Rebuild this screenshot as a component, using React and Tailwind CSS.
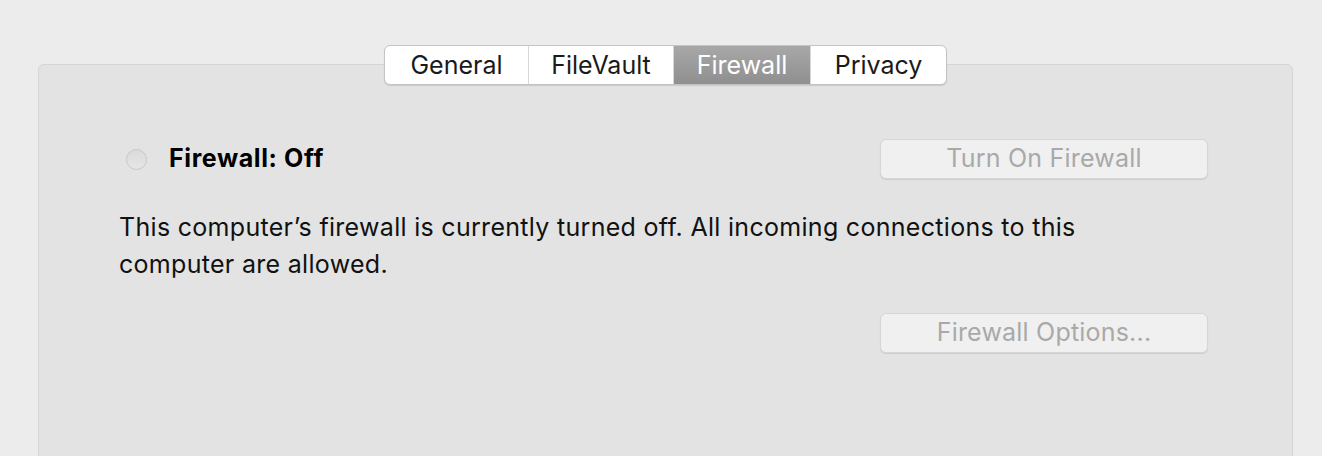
import React from 'react';

const tabs = ['General', 'FileVault', 'Firewall', 'Privacy'];
const tabWidths = ['w-[143px]', 'w-[145px]', 'w-[137px]', 'w-[136px]'];

export default function App() {
  return (
    <div
      className="h-[456px] w-[1322px] overflow-hidden bg-[#ececec] pl-[38px] pr-[29px] pt-[45px] text-black"
      style={{ fontFamily: 'Inter, "Liberation Sans", sans-serif' }}
    >
      {/* Segmented tab control, overlaps the top edge of the panel */}
      <div className="relative z-10 -mb-[21px] flex justify-center">
        <div className="flex h-[40px] overflow-hidden rounded-[6px] border border-[#c4c4c4] bg-white shadow-[0_1px_1px_rgba(0,0,0,0.12)]">
          {tabs.map((t, i) => (
            <div
              key={t}
              className={`flex items-center justify-center pt-[1px] text-[25px] ${tabWidths[i]} ${
                i > 0 ? 'border-l border-[#d8d8d8]' : ''
              } ${t === 'Firewall' ? 'bg-gradient-to-b from-[#a8a8a8] to-[#8f8f8f] text-white' : 'text-[#1a1a1a]'}`}
            >
              {t}
            </div>
          ))}
        </div>
      </div>

      {/* Panel */}
      <div className="h-[420px] rounded-[6px] border border-[#d5d5d5] bg-[#e3e3e3] px-[80px] pt-[74px]">
        <div className="flex h-[40px] items-center justify-between pr-[4px]">
          <div className="flex items-center pl-[7px]">
            <div className="h-[21px] w-[21px] rounded-full border border-[#c6c6c6] bg-gradient-to-b from-[#dadada] to-[#e6e6e6]" />
            <span className="ml-[22px] text-[25px] font-bold tracking-[0.6px]">Firewall: Off</span>
          </div>
          <button className="flex h-[40px] w-[328px] items-center justify-center rounded-[6px] border border-[#d6d6d6] bg-[#f0f0f0] text-[25px] tracking-[0.2px] text-[#a9a9a9] shadow-[0_1px_1px_rgba(0,0,0,0.1)]">
            Turn On Firewall
          </button>
        </div>

        <p className="mt-[30px] text-[25px] leading-[37px] tracking-[0.3px] text-[#111]">
          This computer’s firewall is currently turned off. All incoming connections to this
          <br />
          computer are allowed.
        </p>

        <div className="mt-[30px] flex justify-end pr-[4px]">
          <button className="flex h-[40px] w-[328px] items-center justify-center rounded-[6px] border border-[#d6d6d6] bg-[#f0f0f0] text-[25px] tracking-[0.2px] text-[#a9a9a9] shadow-[0_1px_1px_rgba(0,0,0,0.1)]">
            Firewall Options...
          </button>
        </div>
      </div>
    </div>
  );
}
